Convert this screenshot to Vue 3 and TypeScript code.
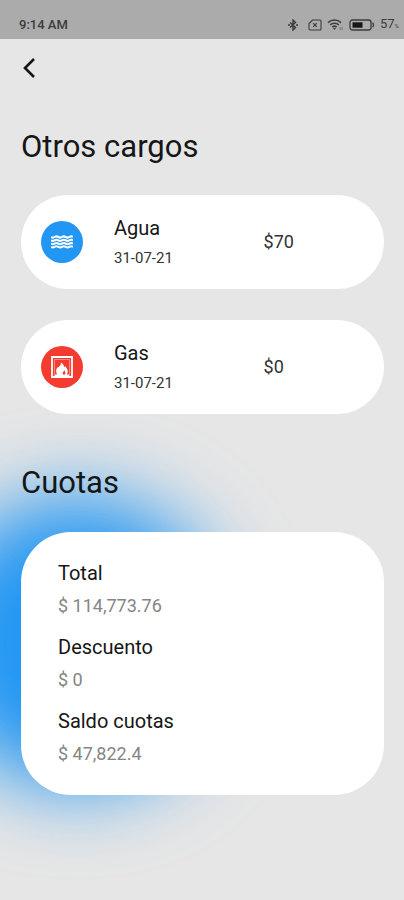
<script setup lang="ts">
interface Charge {
  name: string
  date: string
  amount: string
  kind: 'water' | 'gas'
}

interface Fee {
  label: string
  value: string
}

const charges: Charge[] = [
  { name: 'Agua', date: '31-07-21', amount: '$70', kind: 'water' },
  { name: 'Gas', date: '31-07-21', amount: '$0', kind: 'gas' },
]

const fees: Fee[] = [
  { label: 'Total', value: '$ 114,773.76' },
  { label: 'Descuento', value: '$ 0' },
  { label: 'Saldo cuotas', value: '$ 47,822.4' },
]
</script>

<template>
  <div class="screen">
    <header class="status">
      <span class="time">9:14 AM</span>
      <div class="indicators">
        <svg class="bluetooth" width="12" height="12" viewBox="0 0 12 12" aria-hidden="true">
          <path d="M3 3.500l5.500 5L6 11V1l2.500 2.500-5.500 5" fill="none" stroke="currentColor" stroke-width="1.400" />
          <path d="M1 6h2M9 6h2" stroke="currentColor" stroke-width="1.600" />
        </svg>
        <svg class="sim" width="14" height="12" viewBox="0 0 14 12" aria-hidden="true">
          <path d="M4.500 1H12a1 1 0 0 1 1 1v8a1 1 0 0 1-1 1H2a1 1 0 0 1-1-1V4.500z" fill="none" stroke="currentColor" stroke-width="1.100" />
          <path d="M5.200 4.200l3.600 3.600M8.800 4.200L5.200 7.800" stroke="currentColor" stroke-width="1.200" />
        </svg>
        <svg class="wifi" width="17" height="13" viewBox="0 0 17 13" aria-hidden="true">
          <path d="M1 4.600a9.500 9.500 0 0 1 13 0M3.200 6.900a6.300 6.300 0 0 1 8.600 0M5.400 9.100a3.200 3.200 0 0 1 4.200 0" fill="none" stroke="currentColor" stroke-width="1.600" />
          <path d="M6 10l1.500 2L9 10z" fill="currentColor" />
          <path d="M13 9v3M15 9v3" stroke="currentColor" stroke-width="0.800" opacity="0.600" />
        </svg>
        <svg class="battery" width="26" height="12" viewBox="0 0 26 12" aria-hidden="true">
          <rect x="1" y="1" width="21" height="10" rx="2.500" fill="none" stroke="currentColor" stroke-width="1.300" />
          <rect x="3.500" y="3.300" width="10" height="5.400" fill="#161616" />
          <path d="M23.500 3.800q2 2.200 0 4.400" fill="none" stroke="currentColor" stroke-width="1.300" />
        </svg>
        <span class="percent">57<small>%</small></span>
      </div>
    </header>

    <main class="content">
      <button class="back" type="button" aria-label="Volver">
        <svg width="14" height="22" viewBox="0 0 14 22" aria-hidden="true">
          <path d="M13 2L4 11l9 9" fill="none" stroke="currentColor" stroke-width="2.600" />
        </svg>
      </button>

      <section>
        <h1>Otros cargos</h1>
        <ul class="charges">
          <li v-for="charge in charges" :key="charge.name" class="charge">
            <span class="badge" :class="charge.kind">
              <svg v-if="charge.kind === 'water'" width="22" height="14" viewBox="0 0 22 14" aria-hidden="true">
                <g fill="none" stroke="currentColor" stroke-width="2.100">
                  <path d="M0 2q1.800 1.200 3.600 0t3.700 0 3.700 0 3.700 0 3.700 0 3.600 0" />
                  <path d="M0 5.300q1.800 1.200 3.600 0t3.700 0 3.700 0 3.700 0 3.700 0 3.600 0" />
                  <path d="M0 8.600q1.800 1.200 3.600 0t3.700 0 3.700 0 3.700 0 3.700 0 3.600 0" />
                  <path d="M0 11.900q1.800 1.200 3.600 0t3.700 0 3.700 0 3.700 0 3.700 0 3.600 0" />
                </g>
              </svg>
              <svg v-else width="22" height="22" viewBox="0 0 22 22" aria-hidden="true">
                <path d="M1 1h20v20H1z" fill="none" stroke="currentColor" stroke-width="1.800" />
                <path d="M3.500 20V3.500h15V20" fill="none" stroke="currentColor" stroke-width="0.800" opacity="0.500" />
                <path d="M4 20v-1.500h2C4.500 15 5 12 7.500 11c1.500-.8 2.500-2.500 2.500-4.500 2 1 3 3 3 4.500.6 0 .8-.4 1-1 2.500 2.500 3.500 5.500 2 8.500h2V20z" fill="currentColor" />
                <path d="M12 18.500c-1-2 .8-2.500 1.200-4.500 1.400 2 1.600 3.500.8 4.500z" fill="#f43b30" />
              </svg>
            </span>
            <div class="details">
              <h2>{{ charge.name }}</h2>
              <p class="date">{{ charge.date }}</p>
            </div>
            <span class="amount">{{ charge.amount }}</span>
          </li>
        </ul>
      </section>

      <section class="quotas">
        <h1>Cuotas</h1>
        <dl class="summary">
          <div v-for="fee in fees" :key="fee.label" class="fee">
            <dt>{{ fee.label }}</dt>
            <dd>{{ fee.value }}</dd>
          </div>
        </dl>
      </section>
    </main>
  </div>
</template>

<style>
body {
  margin: 0;
  background: #e6e6e6;
}
</style>

<style scoped>
.screen {
  min-height: 100vh;
  overflow: hidden;
  background: #e6e6e6;
  color: #161616;
  font-family: Roboto, "Liberation Sans", sans-serif;
}

.status {
  display: flex;
  align-items: center;
  justify-content: space-between;
  box-sizing: border-box;
  height: 39px;
  padding: 10px 5px 0 19px;
  background: #ababab;
  color: #3c3c3c;
}

.time {
  font-size: 13px;
  font-weight: 500;
  line-height: 16px;
}

.indicators {
  display: flex;
  align-items: center;
  gap: 5px;
}

.bluetooth {
  margin-right: 4px;
}

.percent {
  font-size: 13px;
  line-height: 16px;
}

.percent small {
  font-size: 6px;
}

.content {
  padding: 16px 20px 0 21px;
}

.back {
  display: flex;
  align-items: center;
  height: 26px;
  padding: 0;
  border: 0;
  background: none;
  color: #161616;
  cursor: pointer;
}

h1,
h2,
p,
ul,
dl,
dd {
  margin: 0;
  padding: 0;
}

h1 {
  position: relative;
  font-size: 31px;
  font-weight: 400;
  line-height: 36px;
}

section {
  margin-top: 48px;
}

.charges {
  display: grid;
  gap: 31px;
  margin-top: 30px;
  list-style: none;
}

.charge {
  position: relative;
  z-index: 1;
  display: grid;
  grid-template-columns: 42px 3fr 2fr;
  align-items: center;
  box-sizing: border-box;
  min-height: 94px;
  padding: 0 0 0 20px;
  border-radius: 47px;
  background: #fff;
}

.badge {
  display: flex;
  align-items: center;
  justify-content: center;
  width: 42px;
  height: 42px;
  border-radius: 50%;
  color: #fff;
}

.water {
  background: #2196f3;
}

.gas {
  background: #f43b30;
}

.details {
  padding-left: 31px;
}

h2,
dt {
  font-size: 20px;
  font-weight: 400;
  line-height: 24px;
}

.date {
  margin-top: 8px;
  color: #333;
  font-size: 15px;
  line-height: 20px;
}

.amount {
  color: #333;
  font-size: 18px;
  line-height: 24px;
}

.quotas {
  position: relative;
  margin-top: 51px;
}

.quotas::before {
  content: "";
  position: absolute;
  top: 31px;
  left: -90px;
  width: 292px;
  height: 292px;
  border-radius: 50%;
  background: #2196f3;
  filter: blur(40px);
}

.summary {
  position: relative;
  display: grid;
  gap: 15px;
  margin-top: 31px;
  padding: 29px 37px 27px;
  border-radius: 50px;
  background: #fff;
}

dd {
  margin-top: 7px;
  color: #858585;
  font-size: 18px;
  line-height: 28px;
}
</style>
